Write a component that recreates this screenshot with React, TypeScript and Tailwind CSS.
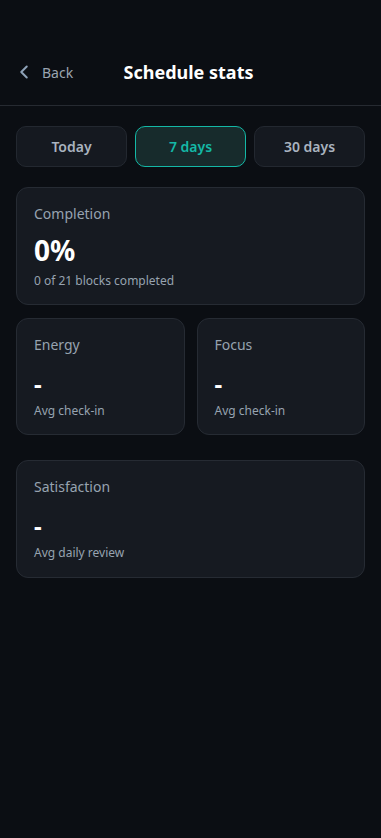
import { ChevronLeft } from 'lucide-react'

const font = { fontFamily: '"Noto Sans", "Open Sans", sans-serif' }

function StatCard({ label, value, note, big }: { label: string; value: string; note: string; big?: boolean }) {
  return (
    <div className={`rounded-xl border border-[#262b33] bg-[#161a21] px-[17px] pt-4 ${big ? 'pb-[14.5px]' : 'pb-[15.5px]'}`}>
      <p className="text-[14px] leading-[20px] text-[#97a3b0]">{label}</p>
      {big ? (
        <p className="mt-2 text-[28px] font-bold leading-[36px] text-white">{value}</p>
      ) : (
        <p className="mt-[13px] text-[24px] font-bold leading-[32px] text-white">{value}</p>
      )}
      <p className={`${big ? 'mt-[5px]' : 'mt-[3px]'} text-[12px] leading-[16px] text-[#97a3b0]`}>{note}</p>
    </div>
  )
}

export default function App() {
  const tabs = ['Today', '7 days', '30 days']
  const active = '7 days'

  return (
    <div className="min-h-[838px] bg-[#0b0e13]" style={font}>
      <header className="relative flex h-[106px] items-end border-b border-[#262a31] px-5 pb-[22px]">
        <button className="flex items-center gap-[7px] text-[14px] text-[#9aa4b0]">
          <ChevronLeft size={22} strokeWidth={2.2} className="-ml-[7px] text-[#8ea2b8]" />
          Back
        </button>
        <h1 className="absolute bottom-[19px] left-0 right-[4px] text-center text-[18px] font-bold text-white">
          Schedule stats
        </h1>
      </header>

      <main className="px-4 pt-5">
        <div className="grid grid-cols-3 gap-2">
          {tabs.map((t) => (
            <button
              key={t}
              className={
                t === active
                  ? 'h-[41px] rounded-[10px] border border-[#14b8a6] bg-[#172b2c] text-[14px] font-semibold text-[#14b8a6]'
                  : 'h-[41px] rounded-[10px] border border-[#232830] bg-[#151920] text-[14px] font-semibold text-[#a9b3bf]'
              }
            >
              {t}
            </button>
          ))}
        </div>

        <div className="mt-5">
          <StatCard label="Completion" value="0%" note="0 of 21 blocks completed" big />
        </div>

        <div className="mt-[13px] grid grid-cols-2 gap-3">
          <StatCard label="Energy" value="-" note="Avg check-in" />
          <StatCard label="Focus" value="-" note="Avg check-in" />
        </div>

        <div className="mt-[25px]">
          <StatCard label="Satisfaction" value="-" note="Avg daily review" />
        </div>
      </main>
    </div>
  )
}
